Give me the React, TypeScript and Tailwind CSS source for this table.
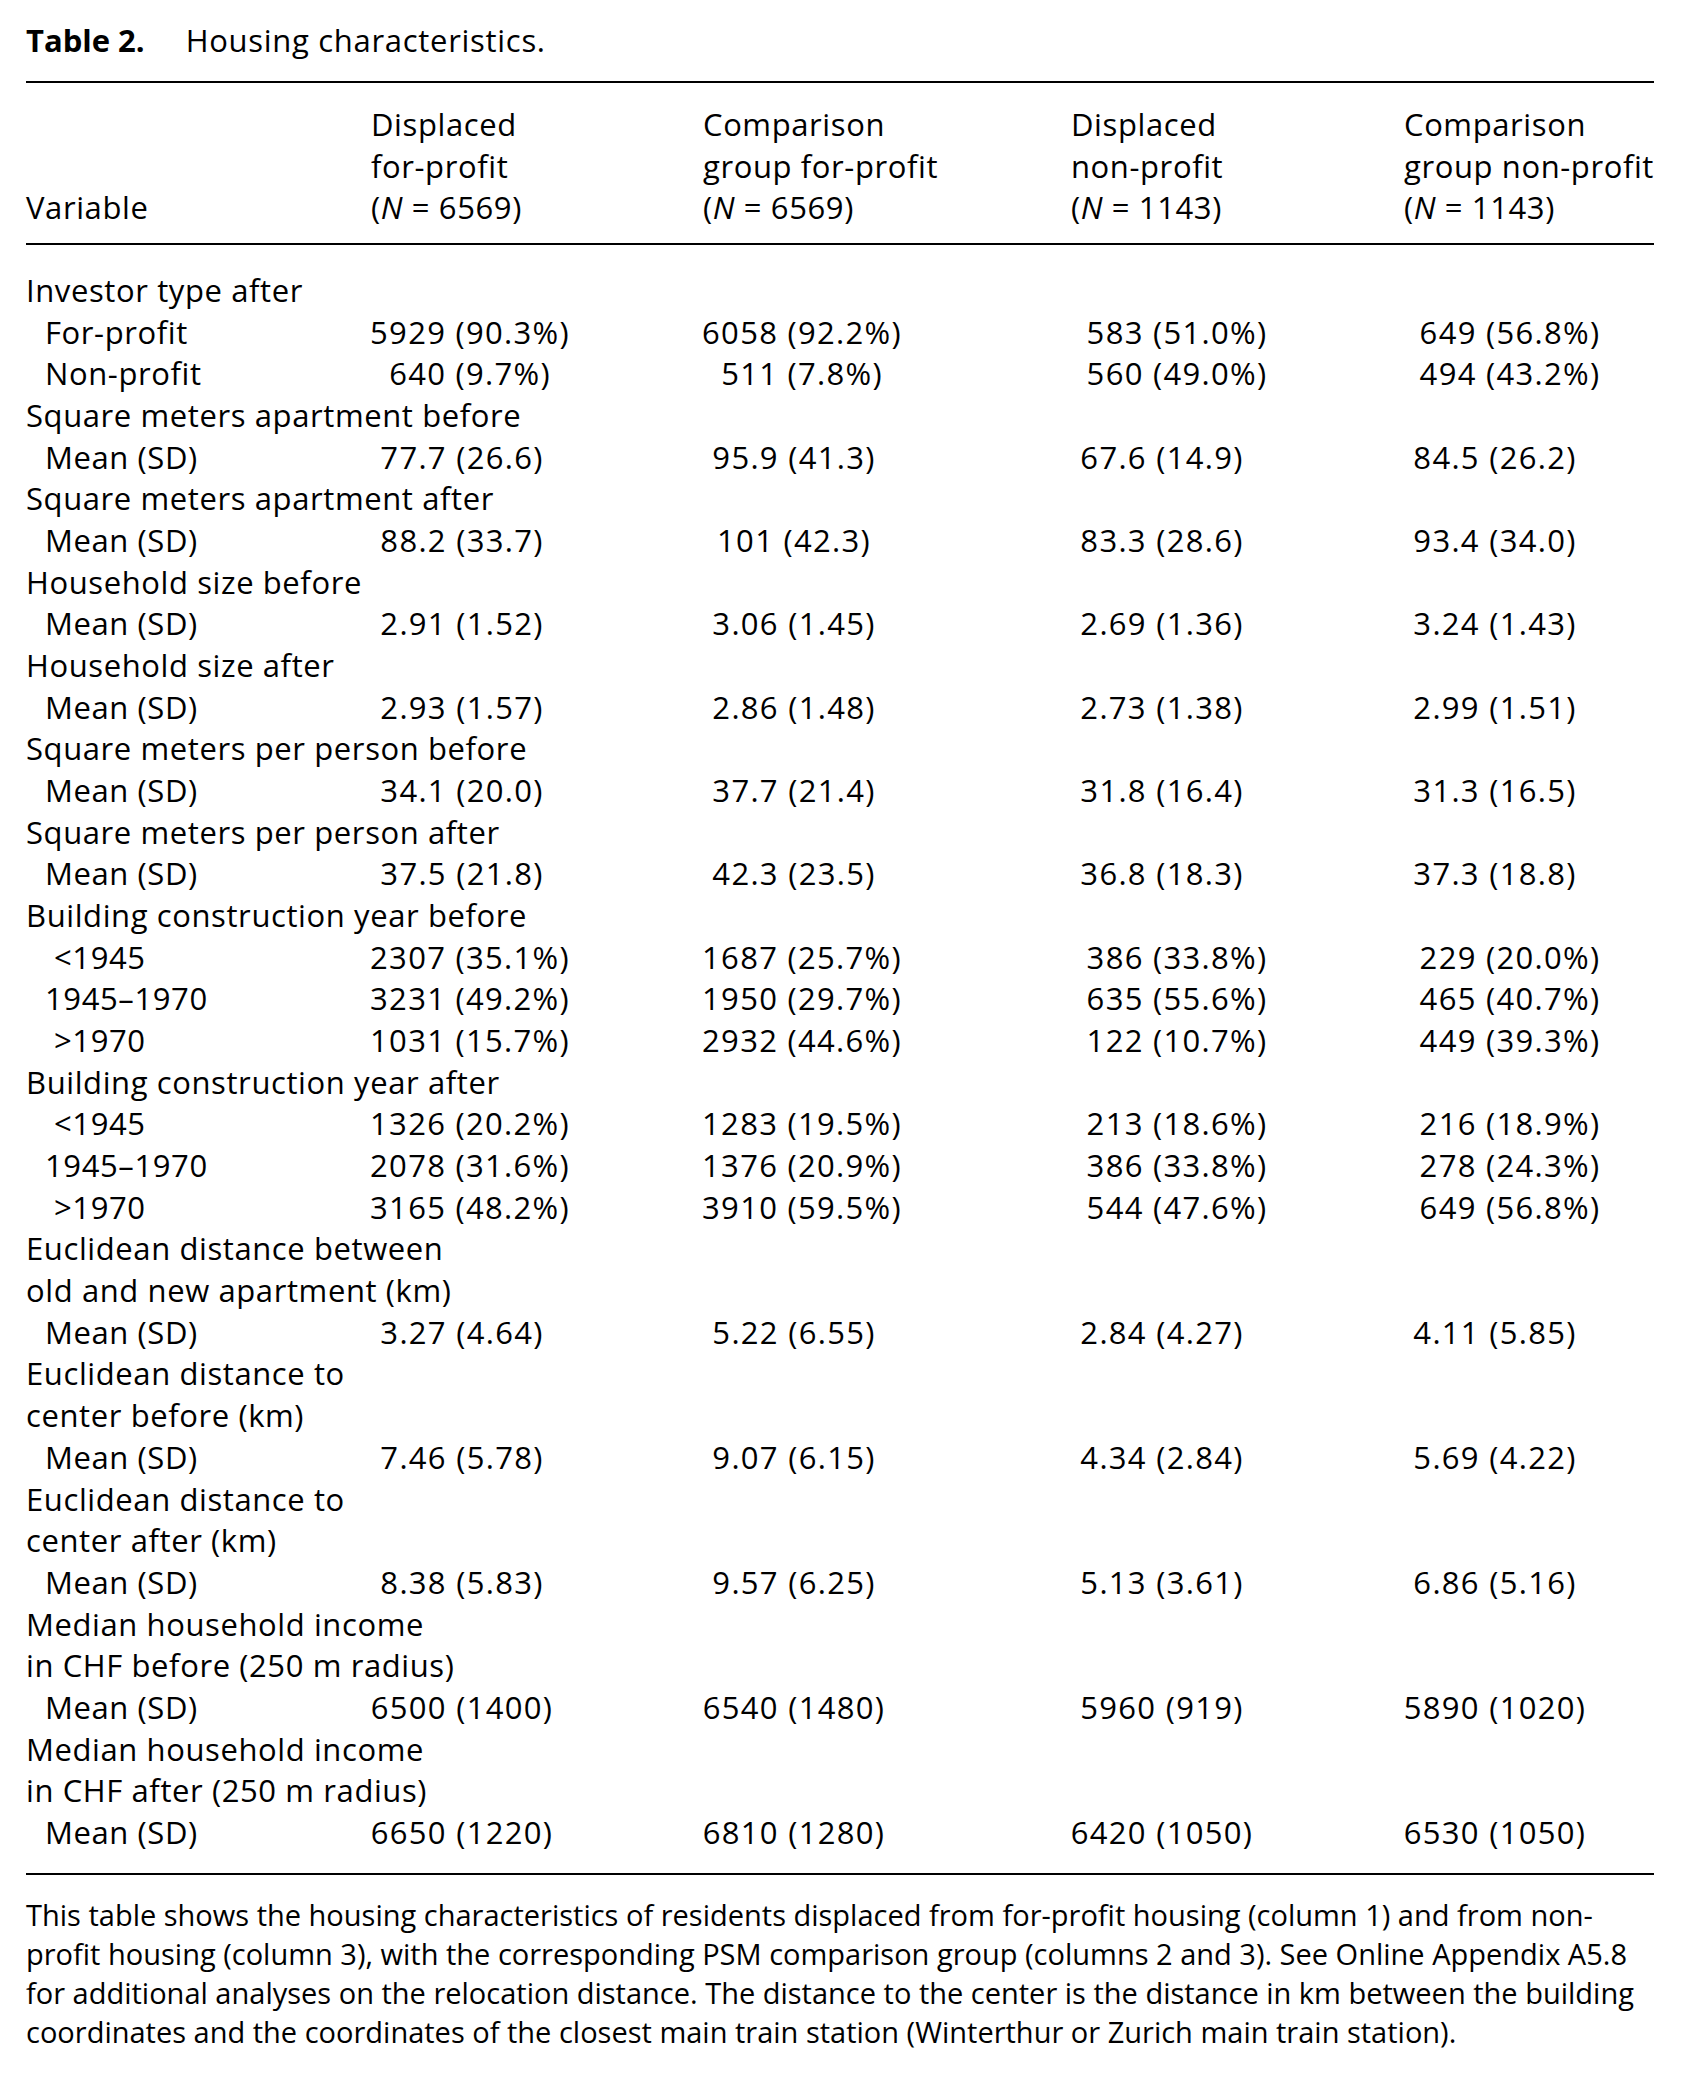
import React from "react";

type Row =
  | { kind: "head"; label: string }
  | { kind: "val"; label: string; indent?: "sub" | "sym"; pct?: boolean; v: [string, string, string, string] };

const rows: Row[] = [
  { kind: "head", label: "Investor type after" },
  { kind: "val", label: "For-profit", indent: "sub", pct: true, v: ["5929 (90.3%)", "6058 (92.2%)", "583 (51.0%)", "649 (56.8%)"] },
  { kind: "val", label: "Non-profit", indent: "sub", pct: true, v: ["640 (9.7%)", "511 (7.8%)", "560 (49.0%)", "494 (43.2%)"] },
  { kind: "head", label: "Square meters apartment before" },
  { kind: "val", label: "Mean (SD)", indent: "sub", v: ["77.7 (26.6)", "95.9 (41.3)", "67.6 (14.9)", "84.5 (26.2)"] },
  { kind: "head", label: "Square meters apartment after" },
  { kind: "val", label: "Mean (SD)", indent: "sub", v: ["88.2 (33.7)", "101 (42.3)", "83.3 (28.6)", "93.4 (34.0)"] },
  { kind: "head", label: "Household size before" },
  { kind: "val", label: "Mean (SD)", indent: "sub", v: ["2.91 (1.52)", "3.06 (1.45)", "2.69 (1.36)", "3.24 (1.43)"] },
  { kind: "head", label: "Household size after" },
  { kind: "val", label: "Mean (SD)", indent: "sub", v: ["2.93 (1.57)", "2.86 (1.48)", "2.73 (1.38)", "2.99 (1.51)"] },
  { kind: "head", label: "Square meters per person before" },
  { kind: "val", label: "Mean (SD)", indent: "sub", v: ["34.1 (20.0)", "37.7 (21.4)", "31.8 (16.4)", "31.3 (16.5)"] },
  { kind: "head", label: "Square meters per person after" },
  { kind: "val", label: "Mean (SD)", indent: "sub", v: ["37.5 (21.8)", "42.3 (23.5)", "36.8 (18.3)", "37.3 (18.8)"] },
  { kind: "head", label: "Building construction year before" },
  { kind: "val", label: "<1945", indent: "sym", pct: true, v: ["2307 (35.1%)", "1687 (25.7%)", "386 (33.8%)", "229 (20.0%)"] },
  { kind: "val", label: "1945–1970", indent: "sub", pct: true, v: ["3231 (49.2%)", "1950 (29.7%)", "635 (55.6%)", "465 (40.7%)"] },
  { kind: "val", label: ">1970", indent: "sym", pct: true, v: ["1031 (15.7%)", "2932 (44.6%)", "122 (10.7%)", "449 (39.3%)"] },
  { kind: "head", label: "Building construction year after" },
  { kind: "val", label: "<1945", indent: "sym", pct: true, v: ["1326 (20.2%)", "1283 (19.5%)", "213 (18.6%)", "216 (18.9%)"] },
  { kind: "val", label: "1945–1970", indent: "sub", pct: true, v: ["2078 (31.6%)", "1376 (20.9%)", "386 (33.8%)", "278 (24.3%)"] },
  { kind: "val", label: ">1970", indent: "sym", pct: true, v: ["3165 (48.2%)", "3910 (59.5%)", "544 (47.6%)", "649 (56.8%)"] },
  { kind: "head", label: "Euclidean distance between" },
  { kind: "head", label: "old and new apartment (km)" },
  { kind: "val", label: "Mean (SD)", indent: "sub", v: ["3.27 (4.64)", "5.22 (6.55)", "2.84 (4.27)", "4.11 (5.85)"] },
  { kind: "head", label: "Euclidean distance to" },
  { kind: "head", label: "center before (km)" },
  { kind: "val", label: "Mean (SD)", indent: "sub", v: ["7.46 (5.78)", "9.07 (6.15)", "4.34 (2.84)", "5.69 (4.22)"] },
  { kind: "head", label: "Euclidean distance to" },
  { kind: "head", label: "center after (km)" },
  { kind: "val", label: "Mean (SD)", indent: "sub", v: ["8.38 (5.83)", "9.57 (6.25)", "5.13 (3.61)", "6.86 (5.16)"] },
  { kind: "head", label: "Median household income" },
  { kind: "head", label: "in CHF before (250 m radius)" },
  { kind: "val", label: "Mean (SD)", indent: "sub", v: ["6500 (1400)", "6540 (1480)", "5960 (919)", "5890 (1020)"] },
  { kind: "head", label: "Median household income" },
  { kind: "head", label: "in CHF after (250 m radius)" },
  { kind: "val", label: "Mean (SD)", indent: "sub", v: ["6650 (1220)", "6810 (1280)", "6420 (1050)", "6530 (1050)"] },
];

const grid = "grid grid-cols-[345px_332px_368px_333px_250px]";

function ValueCell({ text, pct, col }: { text: string; pct?: boolean; col: number }) {
  const shift = pct ? (col < 2 ? "ml-[-31px]" : "ml-[-24px]") : "ml-[-39px]";
  return (
    <div className="whitespace-nowrap">
      <div className={`w-[260px] text-center tracking-[1.3px] ${shift}`}>{text}</div>
    </div>
  );
}

export default function App() {
  return (
    <div
      className="bg-white text-black w-[1681px] min-h-[2078px] pl-[26px] pt-[18px]"
      style={{ fontFamily: "'Open Sans', Lato, sans-serif" }}
    >
      <div className="w-[1628px]">
        <div className="text-[31px] leading-[44px] whitespace-nowrap">
          <span className="font-bold">Table 2.</span>
          <span className="ml-[41px] tracking-[0.7px]">Housing characteristics.</span>
        </div>
        <div className="mt-[19px] h-[2px] bg-black" />
        <div className="text-[31px] leading-[41.67px] tracking-[0.6px] pt-[21px] pb-[14px]">
          <div className={grid}>
            <div className="flex flex-col justify-end">Variable</div>
            {[
              ["Displaced", "for-profit", "6569"],
              ["Comparison", "group for-profit", "6569"],
              ["Displaced", "non-profit", "1143"],
              ["Comparison", "group non-profit", "1143"],
            ].map((h, i) => (
              <div key={i} className="whitespace-nowrap">
                <div>{h[0]}</div>
                <div>{h[1]}</div>
                <div>
                  (<span className="italic">N</span> = {h[2]})
                </div>
              </div>
            ))}
          </div>
        </div>
        <div className="h-[2px] bg-black" />
        <div className="text-[31px] leading-[41.67px] tracking-[0.6px] pt-[25px] pb-[19px]">
          {rows.map((r, i) =>
            r.kind === "head" ? (
              <div key={i} className={grid}>
                <div className="whitespace-nowrap">{r.label}</div>
              </div>
            ) : (
              <div key={i} className={grid}>
                <div className={`whitespace-nowrap ${r.indent === "sym" ? "pl-[28px]" : "pl-[19px]"}`}>{r.label}</div>
                {r.v.map((t, j) => (
                  <ValueCell key={j} text={t} pct={r.pct} col={j} />
                ))}
              </div>
            )
          )}
        </div>
        <div className="h-[2px] bg-black" />
        <div className="text-[29px] leading-[39.3px] pt-[20px] whitespace-nowrap">
          <div>This table shows the housing characteristics of residents displaced from for-profit housing (column 1) and from non-</div>
          <div>profit housing (column 3), with the corresponding PSM comparison group (columns 2 and 3). See Online Appendix A5.8</div>
          <div>for additional analyses on the relocation distance. The distance to the center is the distance in km between the building</div>
          <div>coordinates and the coordinates of the closest main train station (Winterthur or Zurich main train station).</div>
        </div>
      </div>
    </div>
  );
}
